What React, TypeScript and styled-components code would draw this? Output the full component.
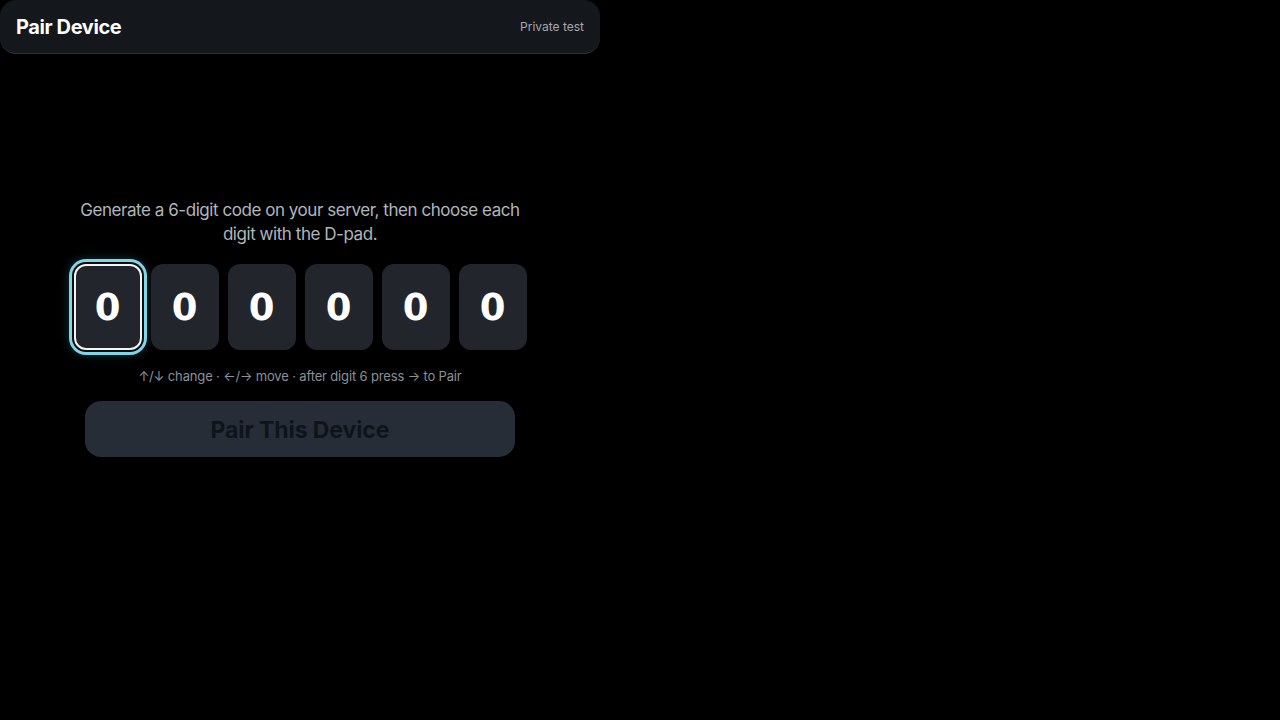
import styled, { createGlobalStyle } from "styled-components"

const GlobalStyle = createGlobalStyle`
  html, body {
    margin: 0;
    padding: 0;
    background: #000;
    font-family: Inter, "Liberation Sans", sans-serif;
  }
`

const digits = [0, 0, 0, 0, 0, 0]

const App = () => {
  const active = 0

  return (
    <>
      <GlobalStyle />
      <Page>
        <Header>
          <Title>Pair Device</Title>
          <Tag>Private test</Tag>
        </Header>
        <Main>
          <Intro>Generate a 6-digit code on your server, then choose each digit with the D-pad.</Intro>
          <DigitRow>
            {digits.map((d, i) => (
              <Digit key={i} $active={i === active}>{d}</Digit>
            ))}
          </DigitRow>
          <Hint>↑/↓ change · ←/→ move · after digit 6 press → to Pair</Hint>
          <PairButton disabled>Pair This Device</PairButton>
        </Main>
      </Page>
    </>
  )
}

const Page = styled.div`
  width: 600px;
  display: flex;
  flex-direction: column;
`

const Header = styled.header`
  height: 54px;
  box-sizing: border-box;
  display: flex;
  align-items: center;
  justify-content: space-between;
  padding: 0 16px;
  background: #14171c;
  border-radius: 16px;
  border-bottom: 1px solid #2c3138;
`

const Title = styled.h1`
  margin: 0;
  font-size: 20px;
  font-weight: 700;
  color: #fff;
  letter-spacing: -0.4px;
`

const Tag = styled.span`
  font-size: 12px;
  color: #a3a8b0;
`

const Main = styled.main`
  display: flex;
  flex-direction: column;
  align-items: center;
  padding-top: 144px;
`

const Intro = styled.p`
  margin: 0;
  max-width: 470px;
  text-align: center;
  font-size: 17px;
  line-height: 24px;
  letter-spacing: -0.45px;
  color: #b1b6bd;
`

const DigitRow = styled.div`
  display: flex;
  gap: 9px;
  margin-top: 18px;
`

const Digit = styled.div<{ $active: boolean }>`
  width: 68px;
  height: 86px;
  box-sizing: border-box;
  display: flex;
  align-items: center;
  justify-content: center;
  border-radius: 12px;
  background: #22252c;
  font-family: "DejaVu Sans", Verdana, sans-serif;
  font-size: 37px;
  font-weight: 700;
  color: #fff;
  border: 2px solid ${(p) => (p.$active ? "#f4f4f4" : "transparent")};
  box-shadow: ${(p) =>
    p.$active
      ? "0 0 0 2px #0b0d10, 0 0 0 5px #7fd6e6, 0 0 12px 3px rgba(110, 210, 230, 0.35)"
      : "none"};
`

const Hint = styled.div`
  margin-top: 17px;
  font-size: 13px;
  line-height: 18px;
  letter-spacing: -0.15px;
  color: #8b9099;
`

const PairButton = styled.button`
  margin-top: 16px;
  width: 430px;
  height: 56px;
  padding-top: 2px;
  border: none;
  border-radius: 16px;
  background: #262d37;
  color: #0f141b;
  font-family: Inter, "Liberation Sans", sans-serif;
  font-size: 23px;
  font-weight: 700;
  letter-spacing: -0.1px;
`

export default App
